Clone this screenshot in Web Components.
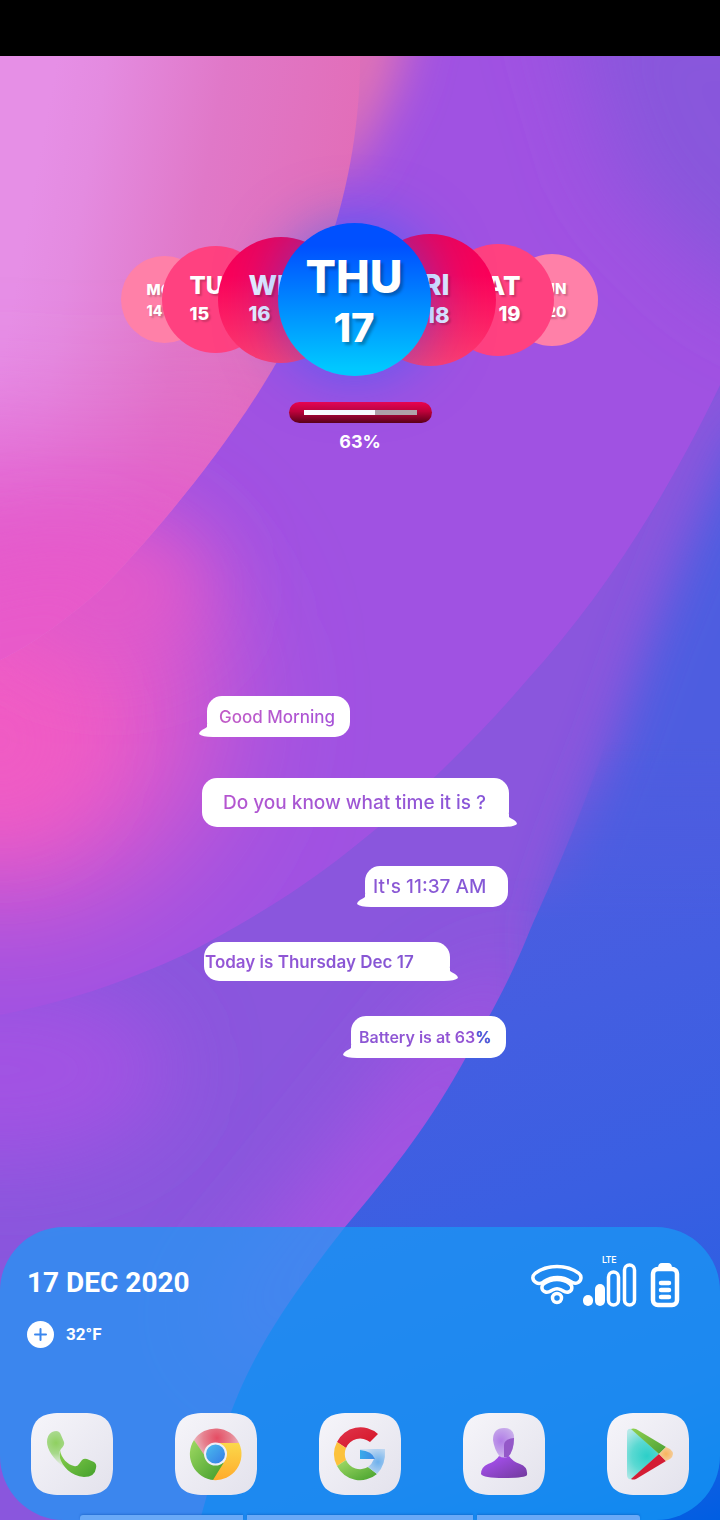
<!DOCTYPE html>
<html lang="en">
<head>
<meta charset="utf-8">
<meta name="viewport" content="width=device-width, initial-scale=1">
<title>Home screen</title>
<style>
  body { margin: 0; font-family: Inter, "Open Sans", sans-serif; color: #fff; background: #3a5fe0; }
</style>
</head>
<body>
<home-screen>
  <week-carousel>
    <day-disc tone="pale" align="start" style="--size:87px;--day:15px;--num:14px;--line:21px;--inset:26px">MON<span slot="date">14</span></day-disc>
    <day-disc tone="pink" align="start" style="--size:107px;--day:24px;--num:18px;--line:28px;--inset:28px;--overlap:-46px;--level:2">TUE<span slot="date">15</span></day-disc>
    <day-disc tone="rose" align="start" aria-label="Wednesday 16" style="--size:126px;--day:27px;--num:20px;--line:28px;--inset:31px;--overlap:-51px;--level:3">WE<span slot="date">16</span></day-disc>
    <day-disc tone="today" style="--size:153px;--day:45px;--num:40px;--line:51px;--inset:0px;--overlap:-66px;--level:4">THU<span slot="date">17</span></day-disc>
    <day-disc tone="rose" align="end" style="--size:132px;--day:28px;--num:22px;--line:30px;--inset:46px;--overlap:-67px;--level:3">FRI<span slot="date">18</span></day-disc>
    <day-disc tone="pink" align="end" style="--size:112px;--day:26px;--num:20px;--line:28px;--inset:33px;--overlap:-54px;--level:2">SAT<span slot="date">19</span></day-disc>
    <day-disc tone="pale" align="end" style="--size:92px;--day:15px;--num:15px;--line:23px;--inset:31px;--overlap:-48px">SUN<span slot="date">20</span></day-disc>
  </week-carousel>
  <charge-meter value="63"></charge-meter>
  <chat-thread>
    <chat-bubble tail="left" style="--w:143px;--h:41px;--pad:12px;--fs:17px;--from:#c25cc6;--to:#a652d8;margin-left:5px">Good Morning</chat-bubble>
    <chat-bubble tail="right" style="--w:307px;--h:49px;--pad:21px;--fs:19px;--from:#b656d0;--to:#8656d8;margin-top:41px">Do you know what time it is ?</chat-bubble>
    <chat-bubble tail="left" side="end" style="--w:143px;--h:41px;--pad:8px;--fs:19px;--from:#8c58d4;--to:#8458d6;margin-top:39px">It's 11:37 AM</chat-bubble>
    <chat-bubble tail="right" style="--w:246px;--h:39px;--pad:1px;--fs:17px;--fw:600;--from:#9656d6;--to:#8456d4;margin:35px 0 0 2px">Today is Thursday Dec 17</chat-bubble>
    <chat-bubble tail="left" side="end" style="--w:155px;--h:42px;--pad:8px;--fs:16px;--fw:600;--from:#8c56d4;--to:#9452d4;margin:35px 3px 0 0">Battery is at 63<span style="color:#4a5cd8">%</span></chat-bubble>
  </chat-thread>
  <dock-panel slot="dock">
    <date-weather slot="info"></date-weather>
    <status-icons slot="info"></status-icons>
    <app-icon name="phone" label="Phone"></app-icon>
    <app-icon name="chrome" label="Chrome"></app-icon>
    <app-icon name="google" label="Google"></app-icon>
    <app-icon name="contacts" label="Contacts"></app-icon>
    <app-icon name="play" label="Play Store"></app-icon>
  </dock-panel>
</home-screen>

<script>
const define = (name, render) => customElements.define(name, class extends HTMLElement {
  constructor() { super(); this.attachShadow({ mode: 'open' }); }
  connectedCallback() { this.shadowRoot.innerHTML = render(this); }
});

define('wall-paper', () => `
<style>
  :host { display: block; }
  svg { display: block; width: 100%; height: 100%; }
</style>
<svg viewBox="0 56 720 1464" preserveAspectRatio="none" aria-hidden="true">
  <defs>
    <linearGradient id="d" gradientUnits="userSpaceOnUse" x1="480" y1="850" x2="720" y2="1520">
      <stop offset="0" stop-color="#4d5de0"/><stop offset=".5" stop-color="#3a5fe2"/><stop offset=".8" stop-color="#2a5ee2"/><stop offset="1" stop-color="#005ee2"/>
    </linearGradient>
    <linearGradient id="a" gradientUnits="userSpaceOnUse" x1="40" y1="150" x2="370" y2="210">
      <stop offset="0" stop-color="#e68fe6"/><stop offset=".15" stop-color="#e48be0"/><stop offset=".5" stop-color="#e078c8"/><stop offset="1" stop-color="#e26cb6"/>
    </linearGradient>
    <linearGradient id="f" gradientUnits="userSpaceOnUse" x1="0" y1="740" x2="0" y2="920">
      <stop offset="0" stop-color="#000"/><stop offset="1" stop-color="#fff"/>
    </linearGradient>
    <filter id="s" x="-60%" y="-60%" width="220%" height="220%"><feGaussianBlur stdDeviation="24"/></filter>
    <filter id="m" x="-60%" y="-60%" width="220%" height="220%"><feGaussianBlur stdDeviation="42"/></filter>
    <filter id="l" x="-80%" y="-80%" width="260%" height="260%"><feGaussianBlur stdDeviation="70"/></filter>
    <clipPath id="ca"><path d="M0 40H360C362 130 345 240 278 360C230 445 150 540 100 590C60 625 30 645 0 660Z"/></clipPath>
    <clipPath id="cb"><path d="M0 40H720V385C665 500 600 600 527 680C480 735 420 795 350 850C300 890 250 920 190 952C120 985 60 1003 0 1015Z"/></clipPath>
    <mask id="fade" maskUnits="userSpaceOnUse" x="0" y="500" width="720" height="1020"><rect y="500" width="720" height="1020" fill="url(#f)"/></mask>
  </defs>
  <rect y="40" width="720" height="1480" fill="#8a56dd"/>
  <ellipse cx="0" cy="1070" rx="170" ry="90" fill="#a252e3" filter="url(#m)"/>
  <path d="M540 960L430 1230L280 1380L200 1320L330 1160L450 1010Z" fill="#a652e2" filter="url(#m)"/>
  <path d="M900 300L735 440L690 540L650 640L615 740L580 830L550 920L580 1520H900Z" fill="#4d5de0" filter="url(#s)"/>
  <g mask="url(#fade)"><path d="M720 500L650 600C610 750 566 850 530 930C508 985 490 1015 460 1068C425 1130 385 1180 345 1227C300 1285 250 1350 225 1430L200 1520H720Z" fill="url(#d)"/></g>
  <g clip-path="url(#cb)">
    <rect y="40" width="720" height="1000" fill="#a052e2"/>
    <path d="M560 -20H850V340L720 280L620 180Z" fill="#8857dc" filter="url(#m)"/>
    <ellipse cx="0" cy="710" rx="210" ry="190" fill="#ee5bc6" filter="url(#l)"/>
    <ellipse cx="0" cy="740" rx="80" ry="90" fill="#f05cc4" filter="url(#m)"/>
    <ellipse cx="110" cy="590" rx="100" ry="70" fill="#e25aca" filter="url(#m)"/>
    <path d="M320 0H415L395 85L350 170H320Z" fill="#e072b6" filter="url(#s)"/>
  </g>
  <g clip-path="url(#ca)">
    <rect y="40" width="400" height="640" fill="url(#a)"/>
    <path d="M-300 460L0 440L120 460L300 420L200 900H-300Z" fill="#e35acc" filter="url(#l)"/>
    <path d="M-100 580L80 540L160 580L100 760H-100Z" fill="#e85aca" filter="url(#m)"/>
  </g>
</svg>`);

define('home-screen', () => `
<style>
  :host { display: flex; flex-direction: column; position: relative; min-height: 100vh; isolation: isolate; overflow: hidden; }
  wall-paper { position: absolute; inset: 56px 0 0; z-index: -1; }
  header { height: 56px; background: #000; }
  main { display: flex; flex-direction: column; align-items: center; flex: 1; padding: 167px 0 80px; }
</style>
<wall-paper></wall-paper>
<header></header>
<main><slot></slot></main>
<slot name="dock"></slot>`);

define('week-carousel', () => `
<style>
  :host { display: flex; align-items: center; justify-content: center; isolation: isolate; padding-right: 2px; }
</style>
<slot></slot>`);

define('day-disc', () => `
<style>
  :host {
    box-sizing: border-box; display: flex; flex-direction: column; justify-content: center; align-items: center; flex: none;
    width: var(--size); height: var(--size); margin-left: var(--overlap, 0px); padding: 0 var(--inset);
    position: relative; z-index: var(--level, 1); border-radius: 50%;
    font-weight: 800; white-space: nowrap; text-shadow: 2px 2px 2px #0003;
  }
  :host([align=start]) { align-items: flex-start; padding-right: 0; }
  :host([align=end]) { align-items: flex-end; padding-left: 0; }
  :host([tone=pale]) { background: #ff80a8; }
  :host([tone=pink]) { background: #ff4180; }
  :host([tone=rose]) { background: linear-gradient(#f10058, #fb0058 30%, #ff3c70); color: #f4f4ff; }
  :host([tone=today]) { padding-top: 4px; background: linear-gradient(#0050ff 15%, #00c8ff 95%); box-shadow: 0 0 60px #1464ff8c; text-shadow: 3px 3px 3px #0004; }
  div { font-size: var(--day); line-height: var(--line); }
  .date { font-size: var(--num); }
</style>
<div><slot></slot></div>
<div class="date"><slot name="date"></slot></div>`);

define('charge-meter', el => `
<style>
  :host { display: flex; flex-direction: column; align-items: center; margin-top: 26px; }
  .pill { box-sizing: border-box; width: 143px; height: 21px; padding: 8px 15px; border-radius: 11px; background: linear-gradient(#f0004c, #c00038 45%, #5a0018); }
  progress { display: block; appearance: none; width: 100%; height: 5px; border: 0; }
  progress::-webkit-progress-bar { background: #b3a3a8; }
  progress::-webkit-progress-value { background: #fff; }
  label { margin-top: 7px; font-size: 18px; line-height: 24px; font-weight: 700; }
</style>
<div class="pill"><progress id="level" max="100" value="${el.getAttribute('value')}"></progress></div>
<label for="level">${el.getAttribute('value')}%</label>`);

define('chat-thread', () => `
<style>
  :host { display: flex; flex-direction: column; align-items: flex-start; box-sizing: border-box; width: 316px; max-width: 100%; padding-right: 9px; margin-top: 242px; }
</style>
<slot></slot>`);

define('chat-bubble', () => `
<style>
  :host { box-sizing: border-box; display: flex; align-items: center; position: relative; min-width: var(--w); height: var(--h); padding-left: var(--pad); border-radius: 15px; background: #fff; white-space: nowrap; }
  :host([side=end]) { align-self: flex-end; margin-right: 1px; }
  p { margin: 0; font-size: var(--fs); line-height: 24px; font-weight: var(--fw, 500); color: transparent; background: linear-gradient(90deg, var(--from), var(--to)); background-clip: text; -webkit-background-clip: text; }
  svg { position: absolute; bottom: 0; left: -8px; width: 30px; height: 14px; overflow: visible; fill: #fff; }
  :host([tail=right]) svg { left: auto; right: -8px; transform: scaleX(-1); }
</style>
<p><slot></slot></p>
<svg viewBox="0 0 30 14" aria-hidden="true"><path d="M8 1V4Q7 5 3 7Q0 9 0 11Q3 14 14 14H30V1Z"/></svg>`);

define('dock-panel', () => `
<style>
  :host { display: block; border-radius: 64px; background: #169ef6ad; }
  .info { display: flex; justify-content: space-between; align-items: flex-start; padding: 28px 40px 0 27px; height: 158px; box-sizing: border-box; }
  nav { display: grid; grid-template-columns: repeat(5, 1fr); justify-items: center; padding: 28px 0 20px; }
  .pages { display: grid; grid-template-columns: 163fr 226fr 163fr; gap: 4px; padding: 0 80px; }
  .pages i { height: 5px; background: #69a9f7; box-shadow: 0 -1px 2px #0a50b066; }
  .pages i:first-child { border-top-left-radius: 3px; }
  .pages i:last-child { border-top-right-radius: 3px; }
</style>
<div class="info"><slot name="info"></slot></div>
<nav aria-label="Apps"><slot></slot></nav>
<div class="pages"><i></i><i></i><i></i></div>`);

define('date-weather', () => `
<style>
  :host { display: block; font-family: Roboto, "Liberation Sans", sans-serif; font-weight: 700; white-space: nowrap; }
  time { display: block; font-size: 28px; line-height: 56px; }
  div { display: flex; align-items: center; gap: 12px; margin-top: 10px; font-size: 17px; line-height: 27px; }
  button { width: 27px; height: 27px; padding: 0; border: 0; border-radius: 50%; background: #fff; }
  svg { display: block; width: 27px; height: 27px; fill: none; stroke: #3b87ee; stroke-width: 2; stroke-linecap: round; }
</style>
<time datetime="2020-12-17">17 DEC 2020</time>
<div>
  <button aria-label="Add weather"><svg viewBox="0 0 27 27"><path d="M13.500 8v11M8 13.500h11"/></svg></button>
  <span>32°F</span>
</div>`);

define('status-icons', () => `
<style>
  :host { display: flex; align-items: flex-end; font-family: Roboto, "Liberation Sans", sans-serif; }
  svg { display: block; fill: none; stroke: #fff; stroke-width: 3.500; }
  .wifi { width: 52px; height: 42px; margin-bottom: 3px; }
  .net { display: flex; flex-direction: column; width: 54px; }
  .net span { font-size: 9px; line-height: 10px; padding-left: 19px; font-weight: 500; }
  .bars { margin-top: -2px; width: 54px; height: 45px; }
  .battery { width: 30px; height: 46px; margin-left: 13px; }
</style>
<svg class="wifi" viewBox="0 0 52 42" aria-label="Wi-Fi">
  <path d="M5 19.500C1 17 1 13 4 10.500C16 1 36 1 48 10.500C51 13 50.500 17.500 47 19.500C44 21 41.500 20 39.500 18.500C32 13 21 13 13 18.500C10.500 20.500 8 21.500 5 19.500Z"/>
  <path d="M14.500 29C10 27.500 10 23 13 20.500C20.500 15 31.500 15 38.500 20.500C42 23 41.500 28 37.500 29C34.500 30 32.500 28 30.500 27C28 25.500 24 25.500 21.500 27C19.500 28 17.500 30 14.500 29Z"/>
  <circle cx="26" cy="35" r="4.500"/>
</svg>
<div class="net">
  <span>LTE</span>
  <svg class="bars" viewBox="0 0 54 45" aria-label="Signal">
    <rect x="0" y="32" width="10" height="11" rx="5" fill="#fff" stroke="none"/>
    <rect x="12" y="21" width="10" height="22" rx="5" fill="#fff" stroke="none"/>
    <rect x="25.500" y="9" width="10" height="33" rx="5"/>
    <rect x="41.500" y="2" width="10" height="40" rx="5"/>
  </svg>
</div>
<svg class="battery" viewBox="0 0 30 46" aria-label="Battery">
  <path d="M8 6Q8 1 12 1H18Q22 1 22 6Z" fill="#fff" stroke="none"/>
  <rect x="3" y="7" width="24" height="36" rx="5" stroke-width="4.500"/>
  <path d="M11 21H19M11 28H19M11 35H19" stroke-width="4.500" stroke-linecap="round"/>
</svg>`);

const glyphs = {
  phone: `
    <defs>
      <radialGradient id="h" gradientUnits="userSpaceOnUse" cx="25" cy="30" r="24"><stop offset="0" stop-color="#8fd060"/><stop offset=".45" stop-color="#a8d98c"/><stop offset="1" stop-color="#d2e8c6" stop-opacity=".4"/></radialGradient>
      <linearGradient id="b" x1="0" y1="0" x2="1" y2="1"><stop offset="0" stop-color="#8ad04e"/><stop offset="1" stop-color="#44a02c"/></linearGradient>
    </defs>
    <path d="M21 19Q28 16 30 22L33 29Q34 32 30 36Q28 38 29 42L33 54C22 46 16 36 16 29Q16 22 21 19Z" fill="url(#h)"/>
    <path d="M29 37C30 45 37 52 43 53Q46 54 48 51L51 47Q53 45 56 46L63 49Q66 51 65 55Q64 64 53 64C40 63 31 53 29 45Z" fill="url(#b)"/>`,
  chrome: `
    <defs>
      <radialGradient id="r" gradientUnits="userSpaceOnUse" cx="42" cy="25" r="27"><stop offset="0" stop-color="#e54c63"/><stop offset=".5" stop-color="#e6808e"/><stop offset="1" stop-color="#edc9d0"/></radialGradient>
      <linearGradient id="g" x1="0" y1="0" x2="1" y2="1"><stop offset="0" stop-color="#a0da62"/><stop offset="1" stop-color="#3e9a2a"/></linearGradient>
      <linearGradient id="y" x1="0" y1="0" x2="0" y2="1"><stop offset="0" stop-color="#fbd84a"/><stop offset="1" stop-color="#ffab2c"/></linearGradient>
      <linearGradient id="c" x1="0" y1="0" x2="1" y2="1"><stop offset="0" stop-color="#4cc0ee"/><stop offset="1" stop-color="#3478e6"/></linearGradient>
    </defs>
    <path d="M19 27A26 26 0 0 1 64 30H41L30 46Z" fill="url(#r)"/>
    <path d="M19 27A26 26 0 0 0 39 67L50 50L32 46Z" fill="url(#g)"/>
    <path d="M64 30A26 26 0 0 1 38 67L51 46L41 30Z" fill="url(#y)"/>
    <circle cx="40.500" cy="41" r="10.500" fill="url(#c)" stroke="#efeff6" stroke-width="2"/>`,
  google: `
    <defs>
      <linearGradient id="r" x1="0" y1="0" x2="1" y2="1"><stop offset="0" stop-color="#e0364c"/><stop offset="1" stop-color="#d41024"/></linearGradient>
      <linearGradient id="g" x1="0" y1="0" x2="1" y2="1"><stop offset="0" stop-color="#a4dc68"/><stop offset="1" stop-color="#44a02c"/></linearGradient>
      <radialGradient id="b" gradientUnits="userSpaceOnUse" cx="59" cy="49" r="17"><stop offset="0" stop-color="#6db0ec"/><stop offset="1" stop-color="#cfdff2"/></radialGradient>
      <linearGradient id="c" x1="0" y1="0" x2="1" y2="0"><stop offset="0" stop-color="#3aabea"/><stop offset="1" stop-color="#3d88e4"/></linearGradient>
    </defs>
    <path d="M18 29A26 26 0 0 1 59 21L51 29A15.500 15.500 0 0 0 27 35Z" fill="url(#r)"/>
    <path d="M18 29A26 26 0 0 0 18 53L27 47A16 16 0 0 1 27 35Z" fill="#fcc23c"/>
    <path d="M18 53A26 26 0 0 0 58 61L49 54A15.500 15.500 0 0 1 27 47Z" fill="url(#g)"/>
    <path d="M41 36H66Q67 52 58 61L49 54Q53 51 55 46H41Z" fill="url(#b)"/>
    <path d="M41 37Q53 38 56 46H41Z" fill="url(#c)"/>`,
  contacts: `
    <defs>
      <radialGradient id="h" gradientUnits="userSpaceOnUse" cx="38" cy="28" r="24"><stop offset="0" stop-color="#b07ce6"/><stop offset=".5" stop-color="#c4a4ea"/><stop offset="1" stop-color="#e4daf2"/></radialGradient>
      <linearGradient id="b" x1="0" y1="0" x2="1" y2="1"><stop offset=".2" stop-color="#a24ee8"/><stop offset="1" stop-color="#713a9c"/></linearGradient>
    </defs>
    <path d="M41 15Q52 15 51 27Q50 38 45 44Q41 46 37 44Q31 36 30 27Q30 15 41 15Z" fill="url(#h)"/>
    <path d="M51 25Q51 38 45 44H41V32Q41 26 51 25Z" fill="#9458c8"/>
    <path d="M36 43Q41 46 46 43Q49 48 57 51Q65 54 64 62Q62 65 41 65Q20 65 18 61Q18 54 25 51Q33 48 36 43Z" fill="url(#b)"/>`,
  play: `
    <defs>
      <radialGradient id="t" gradientUnits="userSpaceOnUse" cx="40" cy="43" r="30"><stop offset="0" stop-color="#2ccfc8"/><stop offset=".5" stop-color="#5ad9d2"/><stop offset="1" stop-color="#b6e8e8"/></radialGradient>
      <linearGradient id="g" x1="0" y1="0" x2="1" y2="1"><stop offset="0" stop-color="#90d050"/><stop offset="1" stop-color="#4aa034"/></linearGradient>
      <radialGradient id="o"><stop offset="0" stop-color="#f8b45c"/><stop offset="1" stop-color="#f4cc98"/></radialGradient>
    </defs>
    <path d="M20 20Q20 15 25 16L52 41L25 66Q20 67 20 62Z" fill="url(#t)"/>
    <path d="M24 16Q26 15 29 16L59 34L52 41Z" fill="url(#g)"/>
    <path d="M24 66Q26 67 29 66L59 48L52 41Z" fill="#d41c34"/>
    <path d="M59 34L63 36Q69 41 63 46L59 48L52 41Z" fill="url(#o)"/>`
};

define('app-icon', el => `
<style>
  :host { display: block; }
  a { display: block; width: 82px; height: 82px; }
  svg { display: block; width: 100%; height: 100%; }
</style>
<a href="#${el.getAttribute('name')}" aria-label="${el.getAttribute('label')}">
  <svg viewBox="0 0 82 82" aria-hidden="true">
    <defs><linearGradient id="tile" x1="0" y1="0" x2="1" y2="1"><stop offset="0" stop-color="#f6f5fa"/><stop offset="1" stop-color="#e3e2ec"/></linearGradient></defs>
    <path d="M26 0H56C74 1 81 8 82 26V56C81 74 74 81 56 82H26C8 81 1 74 0 56V26C1 8 8 1 26 0Z" fill="url(#tile)"/>
    ${glyphs[el.getAttribute('name')]}
  </svg>
</a>`);
</script>
</body>
</html>
